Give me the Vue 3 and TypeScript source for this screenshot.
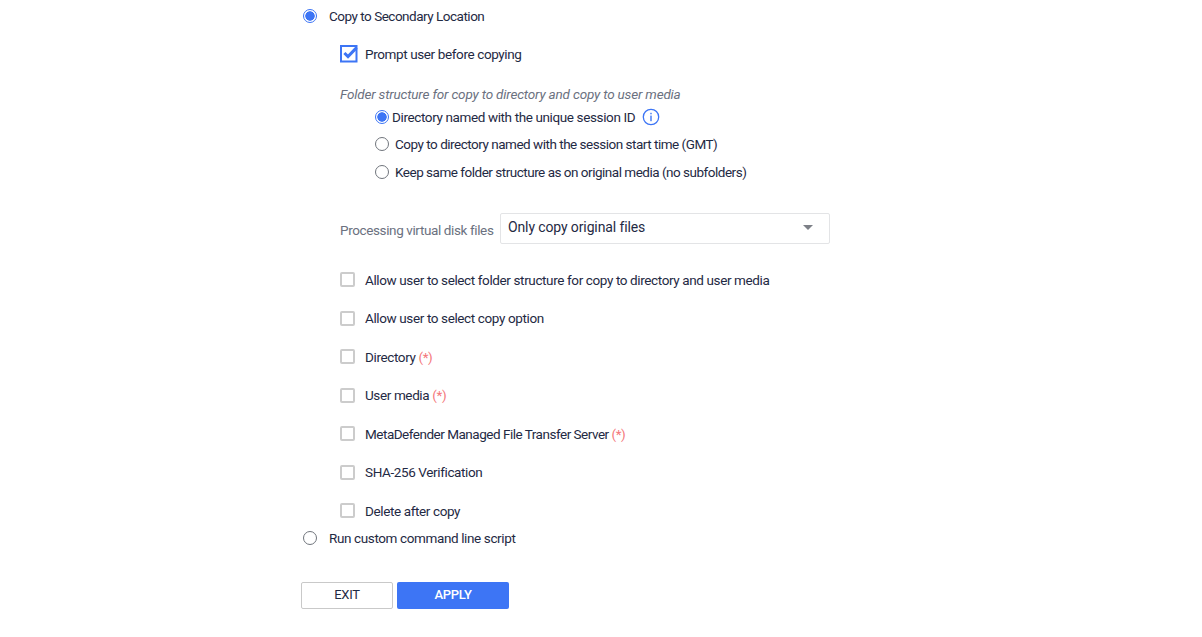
<script setup lang="ts">
const folderOptions = [
  { label: 'Copy to directory named with the session start time (GMT)' },
  { label: 'Keep same folder structure as on original media (no subfolders)' },
]
const checks = [
  { label: 'Allow user to select folder structure for copy to directory and user media', req: false, tight: false },
  { label: 'Allow user to select copy option', req: false, tight: false },
  { label: 'Directory', req: true, tight: false },
  { label: 'User media', req: true, tight: false },
  { label: 'MetaDefender Managed File Transfer Server', req: true, tight: true },
  { label: 'SHA-256 Verification', req: false, tight: false },
  { label: 'Delete after copy', req: false, tight: false },
]
</script>

<template>
  <main class="page">
    <div class="row top-row">
      <span class="radio on"></span>
      <span class="text gap-top tight">Copy to Secondary Location</span>
    </div>

    <section class="nested">
      <div class="row prompt-row">
        <svg class="checked" width="18" height="18" viewBox="0 0 18 18" aria-hidden="true">
          <rect x="1" y="1" width="15.5" height="15.5" fill="none" stroke="#3d75f5" stroke-width="2" />
          <path d="M4.4 8 L8 11.6 L16.6 2.6" fill="none" stroke="#3d75f5" stroke-width="3" />
        </svg>
        <span class="text">Prompt user before copying</span>
      </div>

      <p class="caption">Folder structure for copy to directory and copy to user media</p>

      <div class="folder-group">
        <div class="row folder-row">
          <span class="radio on"></span>
          <span class="text first-opt">Directory named with the unique session ID</span>
          <svg class="info" width="18" height="18" viewBox="0 0 18 18" aria-hidden="true">
            <circle cx="9" cy="9" r="7.7" fill="none" stroke="#3d75f5" stroke-width="1.3" />
            <rect x="8.3" y="7.6" width="1.4" height="5.6" fill="#3d75f5" />
            <rect x="8.3" y="4.8" width="1.4" height="1.5" fill="#3d75f5" />
          </svg>
        </div>
        <div v-for="o in folderOptions" :key="o.label" class="row folder-row">
          <span class="radio"></span>
          <span class="text opt tight">{{ o.label }}</span>
        </div>
      </div>

      <div class="row select-row">
        <span class="select-label">Processing virtual disk files</span>
        <div class="select">
          <span class="select-value">Only copy original files</span>
          <span class="caret"></span>
        </div>
      </div>

      <div class="checks">
        <div v-for="c in checks" :key="c.label" class="row check-row">
          <span class="box"></span>
          <span class="text" :class="{ tight: c.tight }">{{ c.label }}<span v-if="c.req" class="req"> (*)</span></span>
        </div>
      </div>
    </section>

    <div class="row run-row">
      <span class="radio"></span>
      <span class="text gap-top">Run custom command line script</span>
    </div>

    <div class="actions">
      <button class="btn exit" type="button">EXIT</button>
      <button class="btn apply" type="button">APPLY</button>
    </div>
  </main>
</template>

<style>
html, body { background: #fff; }
</style>

<style scoped>
.page {
  width: 1202px;
  height: 637px;
  box-sizing: border-box;
  padding-left: 301px;
  overflow: hidden;
  font-family: Roboto, "Liberation Sans", sans-serif;
  font-size: 13.5px;
  letter-spacing: -0.38px;
  color: #1f2a44;
  background: #fff;
}
.row { display: flex; align-items: center; }
.text { white-space: nowrap; }
.text.tight { letter-spacing: -0.49px; }
.top-row { height: 32px; padding-left: 2px; }
.run-row { height: 16px; padding-left: 2px; }
.gap-top { margin-left: 12px; }
.nested { padding-left: 39px; }
.prompt-row { height: 24px; margin-top: 10px; }
.prompt-row .text { margin-left: 7px; }
.checked { flex: none; }
.caption {
  margin: 19px 0 0;
  height: 18px;
  line-height: 18px;
  font-style: italic;
  letter-spacing: -0.18px;
  color: #6b7180;
}
.folder-group { padding-left: 35px; }
.folder-row { height: 27.5px; }
.first-opt { margin-left: 3px; }
.opt { margin-left: 6px; }
.info { margin-left: 7px; flex: none; }
.radio {
  flex: none;
  box-sizing: border-box;
  width: 14px;
  height: 14px;
  border-radius: 50%;
  border: 1px solid #70757c;
  background: #fff;
}
.radio.on {
  border-color: #3d75f5;
  background: radial-gradient(circle, #3d75f5 0 4.4px, #fff 5px);
}
.select-row { margin-top: 28px; height: 32px; }
.select-label { color: #6b7180; white-space: nowrap; width: 160px; padding-top: 1px; }
.select {
  box-sizing: border-box;
  width: 330px;
  height: 31px;
  margin-top: -2px;
  display: flex;
  align-items: center;
  justify-content: space-between;
  padding: 0 16px 3px 7px;
  border: 1px solid #e3e4e6;
  border-radius: 2px;
  font-size: 14px;
  letter-spacing: -0.12px;
}
.caret {
  width: 0;
  height: 0;
  border-left: 5px solid transparent;
  border-right: 5px solid transparent;
  border-top: 5px solid #7d8087;
}
.checks { margin-top: 15px; }
.check-row { height: 38.5px; }
.box {
  flex: none;
  box-sizing: border-box;
  width: 15px;
  height: 15px;
  border: 2px solid #cccccc;
  border-radius: 2px;
  margin-right: 10px;
}
.req { color: #f4777a; }
.actions { display: flex; gap: 4px; margin-top: 36px; }
.btn {
  box-sizing: border-box;
  height: 27px;
  border-radius: 2px;
  font-family: inherit;
  font-size: 13px;
  letter-spacing: -0.3px;
  padding: 0 0 3px;
}
.exit { width: 92px; background: #fff; border: 1px solid #c9c9c9; color: #1f2a44; }
.apply { width: 112px; background: #3d75f5; border: 0; color: #fff; font-weight: 500; }
</style>
